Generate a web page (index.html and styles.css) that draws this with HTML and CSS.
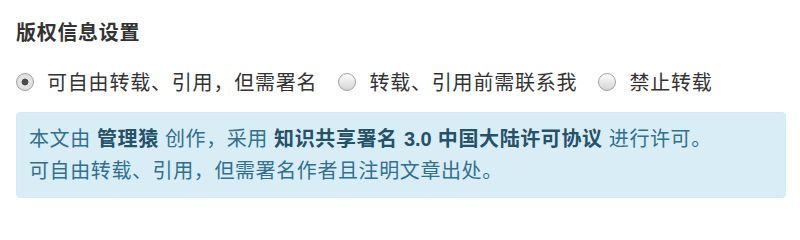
FILE: index.html
```html
<!DOCTYPE html>
<html lang="zh-CN">
<head>
<meta charset="utf-8">
<title>版权信息设置</title>
<link rel="stylesheet" href="styles.css">
</head>
<body>
<div class="page">
  <h3 class="title">版权信息设置</h3>
  <div class="options">
    <label class="option"><input type="radio" name="copyright" checked><span>可自由转载、引用，但需署名</span></label>
    <label class="option"><input type="radio" name="copyright"><span>转载、引用前需联系我</span></label>
    <label class="option"><input type="radio" name="copyright"><span>禁止转载</span></label>
  </div>
  <div class="alert">
    <div>本文由 <b class="strong">管理猿</b> 创作，采用 <b class="strong">知识共享署名 <span class="num">3.0</span> 中国大陆许可协议</b> 进行许可。</div>
    <div>可自由转载、引用，但需署名作者且注明文章出处。</div>
  </div>
</div>
</body>
</html>
```

FILE: styles.css
```css
html, body {
  margin: 0;
  padding: 0;
  background: #fff;
}
body {
  font-family: "Liberation Sans", "Noto Sans CJK SC", sans-serif;
  font-size: 20px;
  color: #333;
}
.page {
  padding: 0 14px 0 16px;
}
.title {
  margin: 0;
  padding-top: 18px;
  font-size: 20px;
  letter-spacing: 0.7px;
  line-height: 30px;
  font-weight: bold;
  color: #333;
}
.options {
  display: flex;
  align-items: center;
  margin-top: 20px;
  line-height: 30px;
  font-size: 20px;
  letter-spacing: 0.8px;
}
.option {
  display: flex;
  align-items: center;
  margin-right: 21px;
}
.option input {
  -webkit-appearance: none;
  appearance: none;
  margin: -2px 13px 0 0;
  width: 18px;
  height: 18px;
  border-radius: 50%;
  border: 1px solid #a3a3a3;
  background: linear-gradient(#fdfdfd, #d4d4d4);
  box-sizing: border-box;
  flex: none;
}
.option input:checked {
  background: radial-gradient(circle, #4a4a4a 0, #4a4a4a 3px, #e6e6e6 3.8px, #d6d6d6 100%);
}
.alert {
  margin-top: 14px;
  padding: 10px 12px;
  background: #d9edf7;
  border: 1px solid #d2eaf4;
  border-radius: 4px;
  color: #31708f;
  line-height: 32px;
  font-size: 20px;
  letter-spacing: 0.6px;
}
.strong {
  color: #245269;
  font-weight: bold;
}
.num {
  letter-spacing: 0;
}
```
